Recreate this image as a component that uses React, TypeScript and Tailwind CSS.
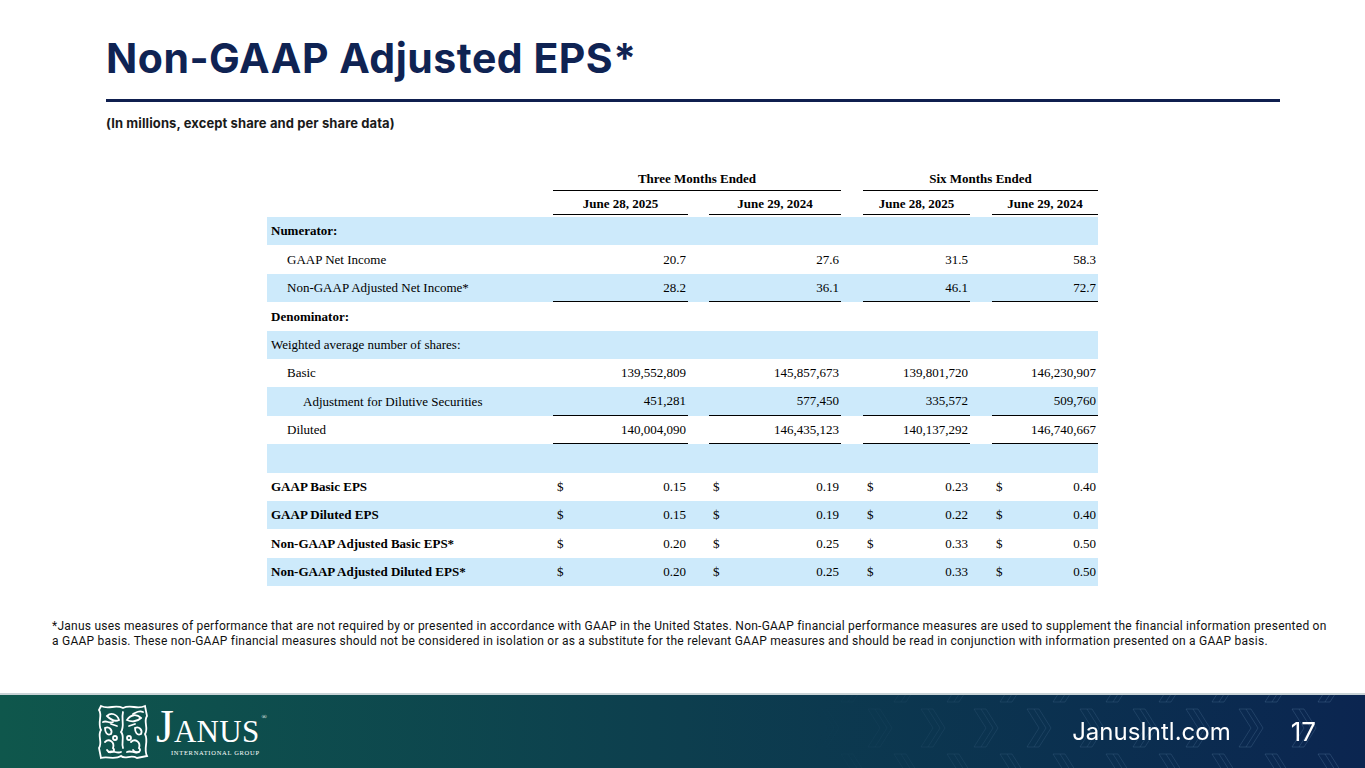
import React from "react";

type Cell = { v: string; line?: boolean };
type Row = {
  label: string;
  indent?: 0 | 1 | 2;
  bold?: boolean;
  dollar?: boolean;
  cells?: Cell[];
};

const rows: Row[] = [
  { label: "Numerator:", bold: true },
  { label: "GAAP Net Income", indent: 1, cells: [{ v: "20.7" }, { v: "27.6" }, { v: "31.5" }, { v: "58.3" }] },
  {
    label: "Non-GAAP Adjusted Net Income*",
    indent: 1,
    cells: [
      { v: "28.2", line: true },
      { v: "36.1", line: true },
      { v: "46.1", line: true },
      { v: "72.7", line: true },
    ],
  },
  { label: "Denominator:", bold: true },
  { label: "Weighted average number of shares:" },
  {
    label: "Basic",
    indent: 1,
    cells: [{ v: "139,552,809" }, { v: "145,857,673" }, { v: "139,801,720" }, { v: "146,230,907" }],
  },
  {
    label: "Adjustment for Dilutive Securities",
    indent: 2,
    cells: [
      { v: "451,281", line: true },
      { v: "577,450", line: true },
      { v: "335,572", line: true },
      { v: "509,760", line: true },
    ],
  },
  {
    label: "Diluted",
    indent: 1,
    cells: [
      { v: "140,004,090", line: true },
      { v: "146,435,123", line: true },
      { v: "140,137,292", line: true },
      { v: "146,740,667", line: true },
    ],
  },
  { label: "" },
  { label: "GAAP Basic EPS", bold: true, dollar: true, cells: [{ v: "0.15" }, { v: "0.19" }, { v: "0.23" }, { v: "0.40" }] },
  { label: "GAAP Diluted EPS", bold: true, dollar: true, cells: [{ v: "0.15" }, { v: "0.19" }, { v: "0.22" }, { v: "0.40" }] },
  {
    label: "Non-GAAP Adjusted Basic EPS*",
    bold: true,
    dollar: true,
    cells: [{ v: "0.20" }, { v: "0.25" }, { v: "0.33" }, { v: "0.50" }],
  },
  {
    label: "Non-GAAP Adjusted Diluted EPS*",
    bold: true,
    dollar: true,
    cells: [{ v: "0.20" }, { v: "0.25" }, { v: "0.33" }, { v: "0.50" }],
  },
];

const grid = "grid grid-cols-[286px_135px_21px_132px_22px_107px_22px_106px]";
const valueCols = ["col-start-2", "col-start-4", "col-start-6", "col-start-8"];

const App: React.FC = () => {
  return (
    <div className="w-[1365px] h-[768px] flex flex-col bg-white overflow-hidden">
      <main className="flex-1 flex flex-col">
        {/* Title block */}
        <div className="pl-[106px] pr-[85px] pt-[38px]">
          <h1 className="font-['Inter',sans-serif] font-bold text-[41px] leading-none text-[#0f2353] tracking-[0.5px]">
            Non-GAAP Adjusted EPS*
          </h1>
          <div className="mt-[20px] h-[3px] bg-[#0f1f4f]" />
          <p className="mt-[13px] font-['Inter',sans-serif] font-bold text-[13px] leading-[16px] text-[#1a1a1a] tracking-[0.1px]">
            (In millions, except share and per share data)
          </p>
        </div>

        {/* Table */}
        <div className="ml-[267px] mt-[37px] w-[831px] font-['Liberation_Serif',serif] text-[13px] text-black">
          <div className={`${grid} h-[23px] items-center`}>
            <div className="col-start-2 col-span-3 text-center font-bold border-b-[1.5px] border-black h-full flex items-center justify-center">
              Three Months Ended
            </div>
            <div className="col-start-6 col-span-3 text-center font-bold border-b-[1.5px] border-black h-full flex items-center justify-center">
              Six Months Ended
            </div>
          </div>
          <div className={`${grid} h-[24px]`}>
            {["June 28, 2025", "June 29, 2024", "June 28, 2025", "June 29, 2024"].map((d, i) => (
              <div
                key={i}
                className={`${valueCols[i]} font-bold border-b-[1.5px] border-black flex items-center justify-center pt-[2px]`}
              >
                {d}
              </div>
            ))}
          </div>
          <div className="h-[2px]" />
          {rows.map((r, i) => (
            <div key={i} className={`${grid} h-[28.4px] ${i % 2 === 0 ? "bg-[#cdeafb]" : ""}`}>
              <div
                className={`flex items-center ${r.bold ? "font-bold" : ""} ${
                  r.indent === 2 ? "pl-[36px]" : r.indent === 1 ? "pl-[20px]" : "pl-[4px]"
                }`}
              >
                {r.label}
              </div>
              {r.cells?.map((c, j) => (
                <div
                  key={j}
                  className={`${valueCols[j]} flex items-center justify-between pl-[4px] pr-[2px] ${
                    c.line ? "border-b-[1.5px] border-black" : ""
                  }`}
                >
                  <span>{r.dollar ? "$" : ""}</span>
                  <span>{c.v}</span>
                </div>
              ))}
            </div>
          ))}
        </div>

        {/* Footnote */}
        <p className="ml-[52px] mt-[33px] font-['Roboto',sans-serif] text-[12px] leading-[15px] text-[#111] tracking-[0.24px]">
          *Janus uses measures of performance that are not required by or presented in accordance with GAAP in the United
          States. Non-GAAP financial performance measures are used to supplement the financial information presented on
          <br />a GAAP basis. These non-GAAP financial measures should not be considered in isolation or as a substitute for the
          relevant GAAP measures and should be read in conjunction with information presented on a GAAP basis.
        </p>
      </main>

      {/* Footer */}
      <footer className="relative h-[75px] shrink-0 border-t-2 border-[#c9d3d6] bg-gradient-to-r from-[#0f574c] via-[#0d3e4e] to-[#0b2550] flex items-center overflow-hidden">
        <Chevrons />
        <div className="relative ml-[95px] flex items-center gap-[5px]">
          <Emblem />
          <div className="flex flex-col items-start text-white font-['Liberation_Serif',serif]">
            <div className="flex items-baseline leading-none">
              <span className="text-[46px] leading-[42px]">J</span>
              <span className="text-[31px] leading-[32px] tracking-[0.3px]">ANUS</span>
              <span className="text-[7px] self-start mt-[8px] ml-[2px]">®</span>
            </div>
            <span className="ml-[15px] mt-[2px] text-[6.5px] leading-none tracking-[0.7px]">INTERNATIONAL GROUP</span>
          </div>
        </div>
        <div className="relative ml-auto mr-[49px] flex items-center text-white font-['Inter',sans-serif]">
          <span className="text-[24px] leading-none">JanusIntl.com</span>
          <span className="ml-[60px] text-[26px] leading-none">17</span>
        </div>
      </footer>
    </div>
  );
};

const Emblem: React.FC = () => (
  <svg width="56" height="60" viewBox="0 0 56 60" fill="none" stroke="white" strokeWidth="1.8" strokeLinecap="round">
    <path d="M6 4 C14 8 20 2 28 6 C36 2 42 8 50 4 L52 14 C48 20 54 26 50 32 C54 40 48 46 52 54 L42 56 C36 52 30 58 26 54 C20 58 12 54 6 56 L4 46 C8 40 2 34 6 28 C2 20 8 14 4 8 Z" />
    <path d="M12 14 C16 10 22 12 24 18 C20 20 16 18 12 14 Z" />
    <path d="M32 18 C36 12 42 12 46 16 C42 20 36 20 32 18 Z" />
    <path d="M28 10 C26 18 30 24 26 30 C30 34 26 40 28 46" />
    <path d="M10 26 C14 24 18 28 16 32 C12 34 10 30 10 26" />
    <path d="M40 26 C44 24 48 28 46 32 C42 34 40 30 40 26" />
    <path d="M10 40 C14 36 20 40 18 46 C22 50 14 52 12 48" />
    <path d="M36 40 C40 36 46 40 44 46 C48 50 40 52 38 48" />
    <path d="M8 20 C12 18 14 22 18 20 M38 12 C42 10 44 8 48 10 M14 50 C18 48 22 52 26 50 M32 50 C36 48 40 52 44 50" />
    <circle cx="20" cy="36" r="2" />
    <circle cx="34" cy="36" r="2" />
    <path d="M16 22 L22 24 M34 24 L40 22" />
  </svg>
);

const Chevrons: React.FC = () => {
  const shapes: React.ReactNode[] = [];
  const rowsY = [-31, 14, 59];
  rowsY.forEach((y, ri) => {
    for (let k = 0; k < 10; k++) {
      const x = 10 + k * 53 + (ri % 2 === 1 ? 0 : 26);
      shapes.push(
        <g key={`${ri}-${k}`} transform={`translate(${x} ${y})`}>
          <path d="M0 0 L7 0 L19 19 L7 38 L0 38 L12 19 Z" />
          <path d="M7 0 L12 0 L24 19 L12 38 L7 38" />
        </g>
      );
    }
  });
  return (
    <svg
      className="absolute right-0 top-0 pointer-events-none"
      width="560"
      height="75"
      viewBox="0 0 560 75"
      fill="none"
      stroke="#6d8fb3"
      strokeOpacity="0.28"
      strokeWidth="1"
    >
      <defs>
        <linearGradient id="fade" x1="0" x2="1" y1="0" y2="0">
          <stop offset="0" stopColor="white" stopOpacity="0" />
          <stop offset="0.4" stopColor="white" stopOpacity="0.6" />
          <stop offset="1" stopColor="white" stopOpacity="1" />
        </linearGradient>
        <mask id="m">
          <rect width="560" height="75" fill="url(#fade)" />
        </mask>
      </defs>
      <g mask="url(#m)">{shapes}</g>
    </svg>
  );
};

export default App;
